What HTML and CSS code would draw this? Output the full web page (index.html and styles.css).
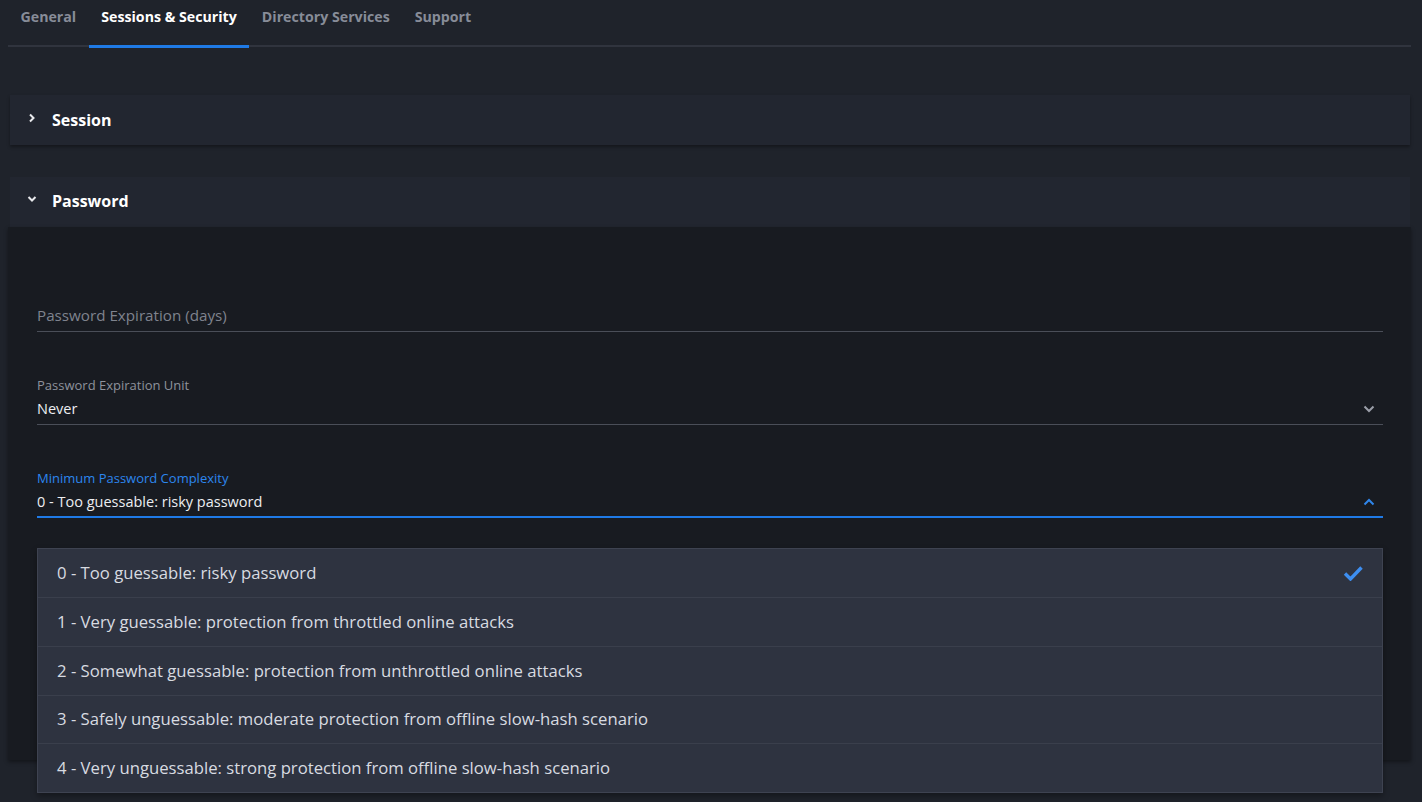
FILE: index.html
```html
<!DOCTYPE html>
<html>
<head>
<meta charset="utf-8">
<link rel="stylesheet" href="styles.css">
</head>
<body>
<div class="page">
  <nav class="tabs">
    <div class="tab">General</div>
    <div class="tab active">Sessions &amp; Security</div>
    <div class="tab">Directory Services</div>
    <div class="tab">Support</div>
  </nav>

  <section class="panel collapsed">
    <div class="panel-head">
      <svg class="chev" width="10" height="10" viewBox="0 0 10 10"><path d="M3 1.5 L6.5 5 L3 8.5" fill="none" stroke="#e8e9ec" stroke-width="2"/></svg>
      <span>Session</span>
    </div>
  </section>

  <section class="panel expanded">
    <div class="panel-head">
      <svg class="chev" width="10" height="10" viewBox="0 0 10 10"><path d="M1.5 3 L5 6.5 L8.5 3" fill="none" stroke="#e8e9ec" stroke-width="2"/></svg>
      <span>Password</span>
    </div>
    <div class="panel-body">
      <div class="field">
        <div class="label-spacer"></div>
        <div class="value placeholder">Password Expiration (days)</div>
      </div>
      <div class="field">
        <div class="label">Password Expiration Unit</div>
        <div class="value">Never
          <svg class="arrow" width="12" height="8" viewBox="0 0 12 8"><path d="M1.5 1.5 L6 6 L10.5 1.5" fill="none" stroke="#9a9ea8" stroke-width="2"/></svg>
        </div>
      </div>
      <div class="field focused">
        <div class="label">Minimum Password Complexity</div>
        <div class="value">0 - Too guessable: risky password
          <svg class="arrow" width="12" height="8" viewBox="0 0 12 8"><path d="M1.5 6.5 L6 2 L10.5 6.5" fill="none" stroke="#2f86ea" stroke-width="2"/></svg>
        </div>
        <ul class="menu">
          <li class="selected">0 - Too guessable: risky password
            <svg class="check" width="20" height="16" viewBox="0 0 20 16"><path d="M2 8.5 L7.5 14 L18.5 2.5" fill="none" stroke="#3d8ef0" stroke-width="3.4"/></svg>
          </li>
          <li>1 - Very guessable: protection from throttled online attacks</li>
          <li>2 - Somewhat guessable: protection from unthrottled online attacks</li>
          <li>3 - Safely unguessable: moderate protection from offline slow-hash scenario</li>
          <li>4 - Very unguessable: strong protection from offline slow-hash scenario</li>
        </ul>
      </div>
    </div>
  </section>
</div>
</body>
</html>
```

FILE: styles.css
```css
html, body {
  margin: 0;
  padding: 0;
  background: #1f232b;
  height: 100%;
  overflow: hidden;
}
body {
  font-family: "Open Sans", "Noto Sans", sans-serif;
  color: #e6e7ea;
}
.page {
  padding: 0 11px 0 8px;
}
.tabs {
  display: flex;
  height: 45px;
  border-bottom: 2px solid #30343e;
}
.tab {
  padding: 7px 12.5px 0;
  font-size: 14.2px;
  font-weight: 700;
  color: #878c98;
  line-height: 20px;
  height: 38px;
}
.tab.active {
  color: #ffffff;
  border-bottom: 3px solid #1f7ae6;
  height: 38px;
  margin-bottom: -2px;
}
.panel {
  margin: 0 1px 0 2px;
}
.panel.collapsed {
  margin-top: 48px;
  background: #222630;
  box-shadow: 0 2px 3px rgba(0,0,0,0.35);
}
.panel.expanded {
  margin: 32px 0 0 0;
}
.panel-head {
  height: 50px;
  display: flex;
  align-items: center;
  padding: 0 0 1px 17px;
  box-sizing: border-box;
  font-size: 16px;
  font-weight: 700;
  color: #ffffff;
  background: #222630;
}
.panel.expanded .panel-head {
  margin: 0 1px 0 2px;
  padding-left: 17px;
  padding-bottom: 3px;
}
.chev {
  margin-right: 15px;
  margin-top: -3px;
}
.panel-body {
  background: #181b21;
  height: 533px;
  padding: 0 28px 0 29px;
  box-shadow: 0 2px 4px rgba(0,0,0,0.4);
}
.field {
  position: relative;
  height: 92px;
  border-bottom: 1px solid #4a4e58;
}
.field:first-child {
  height: 104px;
}
.label-spacer {
  height: 78px;
}
.label {
  padding-top: 45px;
  font-size: 13px;
  line-height: 16px;
  color: #8e929c;
}
.value {
  display: flex;
  justify-content: space-between;
  align-items: center;
  font-size: 14.5px;
  line-height: 20px;
  margin-top: 6px;
  color: #eceef1;
  padding-right: 8px;
}
.field:first-child .value {
  margin-top: 0;
  line-height: 20px;
  font-size: 15.2px;
}
.value.placeholder {
  color: #7f838e;
}
.focused {
  border-bottom: 2px solid #1f7ae6;
  height: 91px;
}
.focused .label {
  color: #2c86ee;
}
.menu {
  position: absolute;
  left: 0;
  right: 0;
  top: 123px;
  margin: 0;
  padding: 0;
  list-style: none;
  background: #2e3340;
  border: 1px solid #3e4351;
  box-shadow: 0 3px 6px rgba(0,0,0,0.35);
  z-index: 5;
}
.menu li {
  display: flex;
  justify-content: space-between;
  align-items: center;
  height: 48.75px;
  padding: 0 19px 1px;
  box-sizing: border-box;
  font-size: 16.7px;
  color: #d8dbe1;
  border-top: 1px solid #3a3f4c;
}
.menu li:first-child {
  border-top: none;
  height: 48px;
}
```
